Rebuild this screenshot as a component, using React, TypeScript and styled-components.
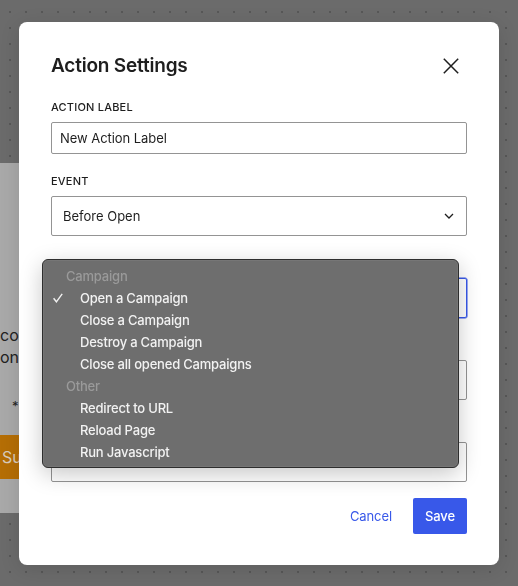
import React from "react";
import styled, { createGlobalStyle } from "styled-components";

const GlobalStyle = createGlobalStyle`
  html, body { margin: 0; padding: 0; }
  body {
    width: 518px;
    height: 586px;
    overflow: hidden;
    font-family: Inter, "Noto Sans", "Liberation Sans", sans-serif;
    background-color: #6b6b6b;
    background-image: radial-gradient(circle, rgba(40,40,40,0.3) 0.8px, transparent 1.2px);
    background-size: 16px 16px;
    background-position: 2px 4px;
  }
  * { box-sizing: border-box; }
`;

const Page = styled.div`
  width: 518px;
  height: 586px;
  padding-top: 163px;
`;

const BackCard = styled.div`
  width: 320px;
  height: 350px;
  background: #a9a9a9;
  padding: 161px 0 0 0;
  display: flex;
  flex-direction: column;
  color: #222;
  font-size: 16px;
`;

const BackLine = styled.div`
  line-height: 22px;
  white-space: nowrap;
`;

const BackNote = styled.div`
  margin-top: 30px;
  padding-left: 12px;
  font-size: 13px;
  line-height: 16px;
`;

const BackButton = styled.div`
  margin-top: 21px;
  height: 44px;
  width: 160px;
  background: #b56e05;
  color: #d9ccbd;
  display: flex;
  align-items: center;
  padding-left: 2px;
  font-size: 16px;
`;

const Overlay = styled.div`
  position: fixed;
  inset: 0;
  display: flex;
  align-items: center;
  justify-content: center;
`;

const Modal = styled.div`
  width: 480px;
  background: #fff;
  border-radius: 8px;
  padding: 28px 32px 31px;
  display: flex;
  flex-direction: column;
  box-shadow: 0 4px 20px rgba(0, 0, 0, 0.12);
`;

const Header = styled.div`
  height: 32px;
  display: flex;
  align-items: center;
  justify-content: space-between;
  margin-bottom: 17px;
`;

const Title = styled.h1`
  margin: 0;
  font-size: 19px;
  line-height: 24px;
  font-weight: 600;
  letter-spacing: -0.2px;
  color: #1e1e1e;
`;

const CloseButton = styled.button`
  width: 32px;
  height: 32px;
  border: none;
  background: transparent;
  padding: 0;
  display: flex;
  align-items: center;
  justify-content: center;
  color: #1e1e1e;
`;

const Field = styled.div<{ $last?: boolean }>`
  position: relative;
  display: flex;
  flex-direction: column;
  margin-bottom: ${(p) => (p.$last ? "0" : "19px")};
`;

const Label = styled.label<{ $covered?: boolean }>`
  font-size: 11px;
  line-height: 16px;
  font-weight: 500;
  text-transform: uppercase;
  letter-spacing: 0.2px;
  color: #1e1e1e;
  margin-bottom: 7px;
  visibility: ${(p) => (p.$covered ? "hidden" : "visible")};
`;

const Box = styled.div<{ $h: number; $focused?: boolean }>`
  height: ${(p) => p.$h}px;
  border: 1px solid ${(p) => (p.$focused ? "#3858e9" : "#949494")};
  box-shadow: ${(p) => (p.$focused ? "0 0 0 0.5px #3858e9" : "none")};
  border-radius: 2px;
  display: flex;
  align-items: center;
  justify-content: space-between;
  font-size: 13px;
  color: #1e1e1e;
`;

const InputText = styled.span`
  padding-left: 8px;
  letter-spacing: -0.05px;
`;

const SelectText = styled.span<{ $covered?: boolean }>`
  padding-left: 11px;
  visibility: ${(p) => (p.$covered ? "hidden" : "visible")};
`;

const Chevron = styled.svg`
  margin-right: 12px;
`;

const Footer = styled.div`
  margin-top: 16px;
  display: flex;
  justify-content: flex-end;
  gap: 9px;
`;

const Button = styled.button<{ $primary?: boolean }>`
  height: 36px;
  padding: 0 12px;
  border: none;
  border-radius: 2px;
  font-family: inherit;
  font-size: 13px;
  letter-spacing: -0.1px;
  font-weight: ${(p) => (p.$primary ? 500 : 400)};
  background: ${(p) => (p.$primary ? "#3858e9" : "transparent")};
  color: ${(p) => (p.$primary ? "#fff" : "#3858e9")};
`;

const Menu = styled.div`
  position: absolute;
  left: -9px;
  top: 4px;
  width: 417px;
  background: #6e6e6e;
  border: 1px solid #2e2e2e;
  border-radius: 6px;
  padding: 5px 0 4px;
  box-shadow: 0 6px 22px rgba(0, 0, 0, 0.22), inset 0 0 0 0.5px rgba(255,255,255,0.12);
  display: flex;
  flex-direction: column;
  z-index: 2;
`;

const GroupTitle = styled.div`
  height: 22px;
  line-height: 22px;
  padding-left: 23px;
  font-size: 13px;
  font-weight: 500;
  letter-spacing: -0.2px;
  color: #9a9a9a;
`;

const Item = styled.div`
  height: 22px;
  display: flex;
  align-items: center;
  padding-left: 10px;
  font-size: 13px;
  font-weight: 500;
  letter-spacing: -0.2px;
  color: #f2f2f2;
`;

const CheckSlot = styled.span`
  width: 27px;
  display: flex;
  align-items: center;
`;

const groups = [
  {
    title: "Campaign",
    items: ["Open a Campaign", "Close a Campaign", "Destroy a Campaign", "Close all opened Campaigns"],
  },
  { title: "Other", items: ["Redirect to URL", "Reload Page", "Run Javascript"] },
];

const selected = "Open a Campaign";

function ChevronDown() {
  return (
    <Chevron width="10" height="6" viewBox="0 0 10 6" fill="none">
      <path d="M1 1 L5 5 L9 1" stroke="#1e1e1e" strokeWidth="1.3" />
    </Chevron>
  );
}

export default function App() {
  return (
    <>
      <GlobalStyle />
      <Page>
        <BackCard>
          <BackLine>con</BackLine>
          <BackLine>on</BackLine>
          <BackNote>*</BackNote>
          <BackButton>Submit</BackButton>
        </BackCard>
      </Page>
      <Overlay>
        <Modal>
          <Header>
            <Title>Action Settings</Title>
            <CloseButton aria-label="Close">
              <svg width="16" height="16" viewBox="0 0 16 16" fill="none">
                <path d="M0.8 0.8 L15.2 15.2 M15.2 0.8 L0.8 15.2" stroke="#1e1e1e" strokeWidth="1.5" />
              </svg>
            </CloseButton>
          </Header>

          <Field>
            <Label>Action Label</Label>
            <Box $h={32}>
              <InputText>New Action Label</InputText>
            </Box>
          </Field>

          <Field>
            <Label>Event</Label>
            <Box $h={40}>
              <SelectText>Before Open</SelectText>
              <ChevronDown />
            </Box>
          </Field>

          <Field>
            <Label>Action</Label>
            <Box $h={40} $focused>
              <SelectText $covered>Open a Campaign</SelectText>
              <ChevronDown />
            </Box>
            <Menu>
              {groups.map((g) => (
                <React.Fragment key={g.title}>
                  <GroupTitle>{g.title}</GroupTitle>
                  {g.items.map((it) => (
                    <Item key={it}>
                      <CheckSlot>
                        {it === selected && (
                          <svg width="10" height="10" viewBox="0 0 10 10" fill="none">
                            <path d="M0.6 5.2 L3.4 8.8 L9.2 0.8" stroke="#f2f2f2" strokeWidth="1.4" />
                          </svg>
                        )}
                      </CheckSlot>
                      {it}
                    </Item>
                  ))}
                </React.Fragment>
              ))}
            </Menu>
          </Field>

          <Field>
            <Label $covered>Campaign</Label>
            <Box $h={40} />
          </Field>

          <Field $last>
            <Label $covered>Delay</Label>
            <Box $h={40} />
          </Field>

          <Footer>
            <Button>Cancel</Button>
            <Button $primary>Save</Button>
          </Footer>
        </Modal>
      </Overlay>
    </>
  );
}
